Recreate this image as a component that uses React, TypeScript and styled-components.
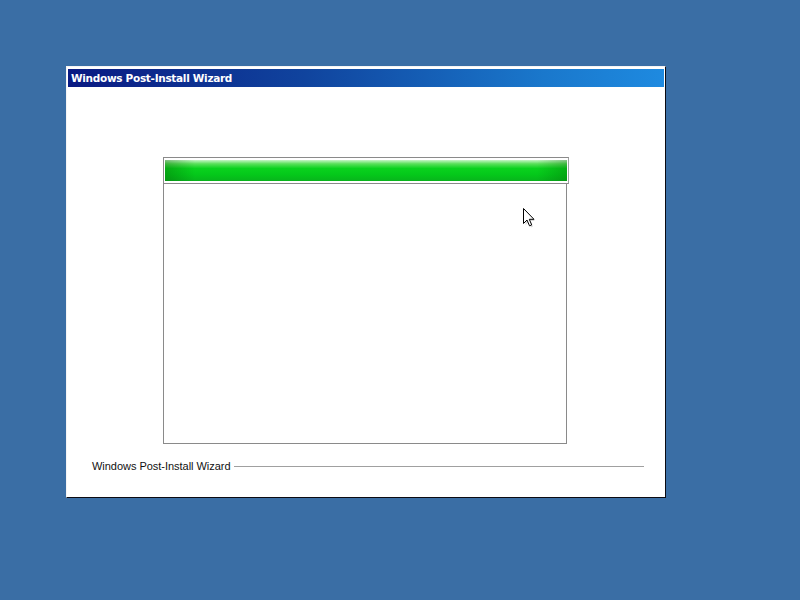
import React from "react";
import styled, { createGlobalStyle } from "styled-components";

const Global = createGlobalStyle`
  html, body { margin: 0; padding: 0; }
  body { background: #3a6ea5; font-family: "Liberation Sans", Arial, sans-serif; }
  #root { width: 800px; height: 600px; }
`;

const Desktop = styled.div`
  position: relative;
  width: 800px;
  height: 600px;
  background: #3a6ea5;
  padding: 66px 0 0 66px;
  box-sizing: border-box;
  overflow: hidden;
`;

const Window = styled.div`
  width: 600px;
  height: 432px;
  box-sizing: border-box;
  background: #ffffff;
  border-style: solid;
  border-width: 1px;
  border-color: #f4f4f4 #0b0b12 #0b0b12 #f4f4f4;
  padding: 2px 1px 1px 1px;
  display: flex;
  flex-direction: column;
  box-shadow: inset -1px -1px 0 #ffffff;
`;

const TitleBar = styled.div`
  height: 18px;
  flex: 0 0 18px;
  background: linear-gradient(to right, #0a1a82 0%, #10449e 40%, #1a78cc 80%, #1e8ae0 100%);
  color: #ffffff;
  font-family: "DejaVu Sans", Tahoma, sans-serif;
  font-weight: bold;
  font-size: 10.5px;
  line-height: 18px;
  padding-left: 3px;
  letter-spacing: -0.3px;
  white-space: nowrap;
`;

const Body = styled.div`
  flex: 1;
  display: flex;
  flex-direction: column;
  align-items: center;
  padding-top: 70px;
  padding-right: 2px;
`;

const ProgressFrame = styled.div`
  width: 404px;
  display: flex;
  flex-direction: column;
`;

const BarBox = styled.div`
  height: 27px;
  border: 1px solid #8a8a8a;
  border-right-color: #a0a0a0;
  padding: 2px 1px;
  box-sizing: border-box;
  margin-right: -2px;
`;

const BarFill = styled.div`
  height: 100%;
  background:
    linear-gradient(to right, rgba(0, 90, 0, 0.35) 0px, rgba(0, 90, 0, 0) 30px, rgba(0, 90, 0, 0) calc(100% - 30px), rgba(0, 90, 0, 0.3) 100%),
    linear-gradient(to bottom, #c8f5c8 0%, #5ae05a 18%, #0ad21e 40%, #04c81a 70%, #08b41c 100%);
`;

const Panel = styled.div`
  height: 259px;
  border: 1px solid #8a8a8a;
  border-top: none;
  background: #ffffff;
`;

const Footer = styled.div`
  margin-top: auto;
  display: flex;
  align-items: center;
  gap: 3px;
  padding: 0 20px 24px 24px;
`;

const FooterText = styled.span`
  font-family: "Liberation Sans", Tahoma, Arial, sans-serif;
  font-size: 11px;
  color: #111111;
  white-space: nowrap;
  letter-spacing: -0.03px;
`;

const FooterLine = styled.div`
  flex: 1;
  height: 1px;
  background: #a0a0a0;
  margin-top: 1px;
`;

const Cursor = styled.svg`
  position: absolute;
  left: 523px;
  top: 208px;
  width: 14px;
  height: 22px;
`;

export default function App() {
  return (
    <>
      <Global />
      <Desktop>
        <Window>
          <TitleBar>Windows Post-Install Wizard</TitleBar>
          <Body>
            <ProgressFrame>
              <BarBox>
                <BarFill />
              </BarBox>
              <Panel />
            </ProgressFrame>
          </Body>
          <Footer>
            <FooterText>Windows Post-Install Wizard</FooterText>
            <FooterLine />
          </Footer>
        </Window>
        <Cursor viewBox="0 0 14 22">
          <path d="M2.5 2.5 L2.5 17 L5.5 14 L8 19.5 L10 18.6 L7.6 13 L11.8 13 Z" fill="rgba(0,0,0,0.15)" />
          <path d="M0.5 0.5 L0.5 15.5 L4 12 L6.5 17.8 L8.7 16.9 L6.3 11.3 L11 11.3 Z" fill="#ffffff" stroke="#000000" strokeWidth="1" strokeLinejoin="miter" />
        </Cursor>
      </Desktop>
    </>
  );
}
